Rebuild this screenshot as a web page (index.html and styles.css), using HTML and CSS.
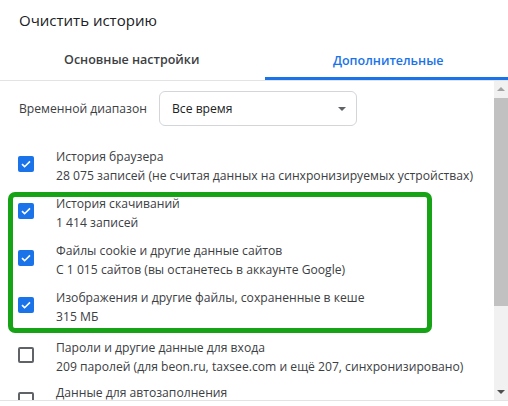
FILE: index.html
```html
<!DOCTYPE html>
<html lang="ru">
<head>
<meta charset="utf-8">
<link rel="stylesheet" href="styles.css">
</head>
<body>
<div class="dialog">
  <div class="title">Очистить историю</div>
  <div class="tabs">
    <div class="tab">Основные настройки</div>
    <div class="tab active">Дополнительные</div>
  </div>
  <div class="body">
    <div class="content">
      <div class="range">
        <span class="range-label">Временной диапазон</span>
        <div class="select">
          <span>Все время</span>
          <span class="caret"></span>
        </div>
      </div>
      <div class="item">
        <span class="cb checked"><svg viewBox="0 0 16 16" width="16" height="16"><path d="M4 8.2l2.6 2.5L12 5.4" fill="none" stroke="#fff" stroke-width="1.6"/></svg></span>
        <div class="text"><div>История браузера</div><div>28 075 записей (не считая данных на синхронизируемых устройствах)</div></div>
      </div>
      <div class="item">
        <span class="cb checked"><svg viewBox="0 0 16 16" width="16" height="16"><path d="M4 8.2l2.6 2.5L12 5.4" fill="none" stroke="#fff" stroke-width="1.6"/></svg></span>
        <div class="text"><div>История скачиваний</div><div>1 414 записей</div></div>
      </div>
      <div class="item">
        <span class="cb checked"><svg viewBox="0 0 16 16" width="16" height="16"><path d="M4 8.2l2.6 2.5L12 5.4" fill="none" stroke="#fff" stroke-width="1.6"/></svg></span>
        <div class="text"><div>Файлы cookie и другие данные сайтов</div><div>С 1 015 сайтов (вы останетесь в аккаунте Google)</div></div>
      </div>
      <div class="item">
        <span class="cb checked"><svg viewBox="0 0 16 16" width="16" height="16"><path d="M4 8.2l2.6 2.5L12 5.4" fill="none" stroke="#fff" stroke-width="1.6"/></svg></span>
        <div class="text"><div>Изображения и другие файлы, сохраненные в кеше</div><div>315 МБ</div></div>
      </div>
      <div class="item after-box">
        <span class="cb"></span>
        <div class="text"><div>Пароли и другие данные для входа</div><div>209 паролей (для beon.ru, taxsee.com и ещё 207, синхронизировано)</div></div>
      </div>
      <div class="item last">
        <span class="cb"></span>
        <div class="text"><div>Данные для автозаполнения</div><div>&nbsp;</div></div>
      </div>
    </div>
    <div class="scrollbar">
      <span class="arrow up"></span>
      <span class="thumb"></span>
      <span class="spacer"></span>
      <span class="arrow down"></span>
    </div>
  </div>
  <div class="highlight"></div>
</div>
</body>
</html>
```

FILE: styles.css
```css
* { box-sizing: border-box; }
html, body { margin: 0; padding: 0; background: #fff; }
body {
  font-family: "Open Sans", "Noto Sans", "DejaVu Sans", sans-serif;
  color: #3c4043;
  width: 508px;
  height: 406px;
  overflow: hidden;
}
.dialog { position: relative; width: 508px; height: 406px; }
.title {
  height: 40px;
  padding: 9px 0 0 19px;
  font-size: 15px;
  color: #202124;
  line-height: 22px;
}
.tabs {
  display: flex;
  height: 41px;
  border-bottom: 1px solid #e3e3e3;
}
.tab {
  flex: 1;
  display: flex;
  justify-content: center;
  align-items: center;
  font-size: 12.5px;
  font-weight: 600;
  color: #3c4043;
  padding-bottom: 2px;
}
.tab:first-child { margin-left: 12px; }
.tab.active {
  margin-left: 13px;
  padding-left: 4px;
  color: #1a73e8;
  border-bottom: 3px solid #1a73e8;
  padding-bottom: 0;
  padding-top: 3px;
}
.body {
  display: flex;
  height: 320px;
  border-bottom: 1px solid #e3e3e3;
  overflow: hidden;
}
.content {
  flex: 1;
  padding-top: 10px;
  font-size: 12.15px;
}
.range {
  display: flex;
  align-items: center;
  padding-left: 19px;
  height: 35px;
}
.range-label { width: 140px; color: #3c4043; }
.select {
  width: 198px;
  height: 35px;
  border: 1px solid #d3d5d9;
  border-radius: 6px;
  display: flex;
  align-items: center;
  justify-content: space-between;
  padding: 0 10px 0 12px;
  color: #202124;
}
.caret {
  width: 0; height: 0;
  border-left: 4px solid transparent;
  border-right: 4px solid transparent;
  border-top: 4px solid #5f6368;
}
.item {
  display: flex;
  align-items: center;
  padding-left: 18px;
  margin-top: 9px;
  height: 38px;
}
.range + .item { margin-top: 21px; }
.item.after-box { margin-top: 12px; }
.item.last { margin-top: 7px; }
.cb {
  width: 16px;
  height: 16px;
  border: 2px solid #5f6368;
  border-radius: 2px;
  flex: none;
  margin-right: 22px;
  margin-top: -4px;
  display: flex;
}
.cb.checked { background: #1a73e8; border: none; }
.cb svg { display: block; }
.text { line-height: 19px; color: #3c4043; white-space: nowrap; }
.scrollbar {
  width: 14px;
  background: #f1f1f1;
  display: flex;
  flex-direction: column;
  align-items: center;
}
.arrow {
  width: 0; height: 0;
  border-left: 4px solid transparent;
  border-right: 4px solid transparent;
  margin: 6px 0 5px;
}
.arrow.up { border-bottom: 4px solid #a3a3a3; }
.arrow.down { border-top: 4px solid #505050; margin: 5px 0 6px; }
.thumb {
  width: 14px;
  height: 208px;
  background: #c1c1c1;
  margin-top: 2px;
}
.spacer { flex: 1; }
.highlight {
  position: absolute;
  left: 8px;
  top: 192px;
  width: 424px;
  height: 141px;
  border: 5px solid #16a316;
  border-radius: 7px;
  pointer-events: none;
}
```
